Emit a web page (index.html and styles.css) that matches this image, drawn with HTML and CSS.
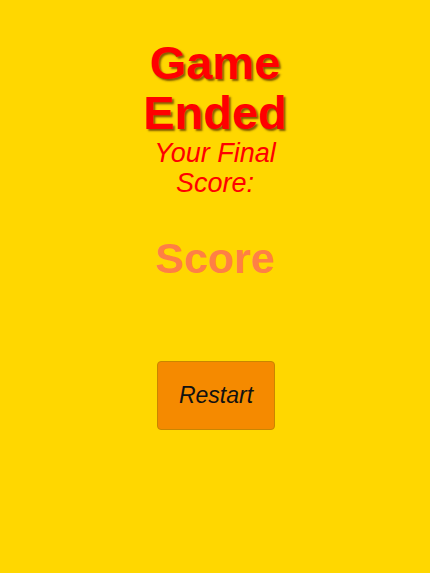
FILE: index.html
```html
<!DOCTYPE html>
<html>
<head>
<meta charset="utf-8">
<link rel="stylesheet" href="styles.css">
</head>
<body>
<main class="screen">
  <h1 class="title">Game Ended</h1>
  <p class="subtitle">Your Final Score:</p>
  <p class="score">Score</p>
  <button class="restart">Restart</button>
</main>
</body>
</html>
```
FILE: styles.css
```css
html, body {
  margin: 0;
  padding: 0;
  height: 100%;
  background: #FFD700;
}
.screen {
  display: flex;
  flex-direction: column;
  align-items: center;
  font-family: "Liberation Sans", Arial, sans-serif;
  padding-top: 38px;
}
.title {
  margin: 0;
  width: 150px;
  text-align: center;
  font-size: 47px;
  line-height: 50px;
  font-weight: bold;
  color: #FF0000;
  text-shadow: 2px 2px 2px rgba(80, 40, 0, 0.7);
}
.subtitle {
  margin: 0;
  width: 150px;
  text-align: center;
  font-size: 27px;
  line-height: 30px;
  font-style: italic;
  color: #FF0000;
}
.score {
  margin: 35px 0 0;
  font-size: 43px;
  line-height: 50px;
  font-weight: bold;
  color: #FF7F45;
}
.restart {
  margin-top: 78px;
  margin-left: 2px;
  width: 118px;
  height: 69px;
  background: #F58A00;
  border: 1px solid #C98600;
  border-radius: 4px;
  font-family: "Liberation Sans", Arial, sans-serif;
  font-style: italic;
  font-size: 23px;
  color: #111;
  padding: 0;
}
```
